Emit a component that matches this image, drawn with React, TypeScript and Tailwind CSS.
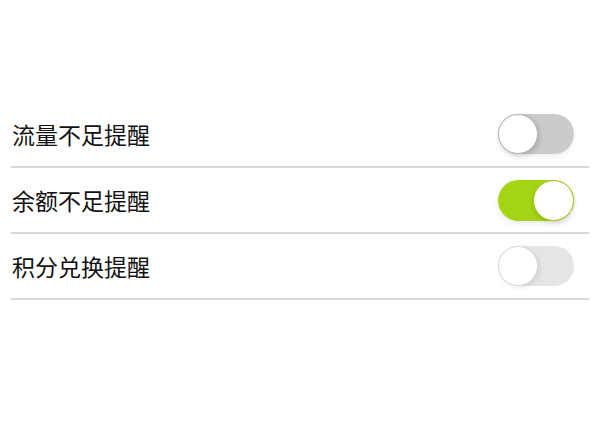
import React from "react";

type Row = { label: string; state: "off" | "on" | "disabled" };

const rows: Row[] = [
  { label: "流量不足提醒", state: "off" },
  { label: "余额不足提醒", state: "on" },
  { label: "积分兑换提醒", state: "disabled" },
];

function Toggle({ state }: { state: Row["state"] }) {
  if (state === "on") {
    return (
      <div className="relative h-[41px] w-[76px] rounded-full bg-[#a5d414] shadow-[0_3px_6px_rgba(0,0,0,0.08)]">
        <div className="absolute right-0 top-0 h-[41px] w-[41px] rounded-full border-[1.5px] border-[#9cc913] bg-white shadow-[0_2px_4px_rgba(0,0,0,0.12)]" />
      </div>
    );
  }
  if (state === "off") {
    return (
      <div className="relative h-[40px] w-[76px] rounded-full bg-[#cbcbcb] shadow-[0_3px_6px_rgba(0,0,0,0.06)]">
        <div className="absolute left-0 top-0 h-[40px] w-[40px] rounded-full border-[1.5px] border-[#b4b4b4] bg-white shadow-[2px_2px_5px_rgba(0,0,0,0.15)]" />
      </div>
    );
  }
  return (
    <div className="relative h-[40px] w-[76px] rounded-full bg-[#e5e5e5]">
      <div className="absolute left-0 top-0 h-[40px] w-[40px] rounded-full border-[1.5px] border-[#d9d9d9] bg-white shadow-[2px_2px_5px_rgba(0,0,0,0.08)]" />
    </div>
  );
}

export default function App() {
  return (
    <div
      className="h-[424px] w-[600px] bg-white pt-[102px]"
      style={{ fontFamily: '"Noto Sans CJK SC", "Noto Sans", sans-serif' }}
    >
      <div className="mx-[11px]">
        {rows.map((r) => (
          <div
            key={r.label}
            className="flex h-[66px] items-center justify-between border-b-2 border-[#d6d6d6] pl-[1px] pr-[15px]"
          >
            <span className="text-[23px] leading-none text-[#111]">{r.label}</span>
            <Toggle state={r.state} />
          </div>
        ))}
      </div>
    </div>
  );
}
